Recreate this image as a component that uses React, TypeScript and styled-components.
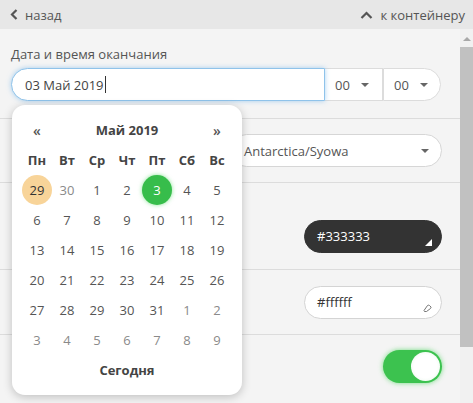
import React from "react";
import styled, { createGlobalStyle } from "styled-components";

const Global = createGlobalStyle`
  html, body { margin: 0; padding: 0; }
  body {
    background: #f4f4f4;
    font-family: "Open Sans", "Noto Sans", sans-serif;
    font-size: 13px;
    color: #555;
    overflow: hidden;
  }
  * { box-sizing: border-box; }
`;

const Page = styled.div`
  width: 473px;
  height: 403px;
  display: flex;
  flex-direction: column;
  position: relative;
  overflow: hidden;
`;

const Header = styled.div`
  height: 29px;
  flex: none;
  background: #e7e7e7;
  display: flex;
  align-items: center;
  justify-content: space-between;
  padding: 0 8px 0 10px;
  color: #555;
`;

const HeaderLink = styled.div`
  display: flex;
  align-items: center;
  gap: 7px;
`;

const Body = styled.div`
  flex: 1;
  display: flex;
  min-height: 0;
`;

const Content = styled.div`
  flex: 1;
  display: flex;
  flex-direction: column;
`;

const Scrollbar = styled.div`
  width: 13px;
  flex: none;
  background: #f1f1f1;
  display: flex;
  flex-direction: column;
  align-items: center;
  padding-top: 8px;
`;

const ScrollArrow = styled.div`
  width: 0;
  height: 0;
  border-left: 4px solid transparent;
  border-right: 4px solid transparent;
  border-bottom: 4px solid #a8a8a8;
`;

const ScrollThumb = styled.div`
  margin-top: 6px;
  width: 13px;
  height: 300px;
  background: #c1c1c1;
`;

const Section = styled.div<{ $h: number; $top?: boolean }>`
  height: ${(p) => p.$h}px;
  flex: none;
  border-top: ${(p) => (p.$top ? "1px solid #dcdcdc" : "none")};
  padding: 0 18px 0 11px;
`;

const DateSection = styled(Section)`
  padding-top: 16px;
`;

const RowSection = styled(Section)<{ $align?: string; $pt?: number }>`
  display: flex;
  align-items: ${(p) => p.$align || "center"};
  justify-content: flex-end;
  padding-top: ${(p) => p.$pt || 0}px;
`;

const Label = styled.div`
  color: #555;
  line-height: 18px;
  margin-bottom: 5px;
`;

const InputGroup = styled.div`
  display: flex;
  height: 33px;
`;

const DateInput = styled.div`
  width: 314px;
  height: 33px;
  border: 1px solid #8fc3ea;
  border-radius: 17px 0 0 17px;
  background: #fff;
  box-shadow: 0 0 5px rgba(102, 175, 233, 0.55);
  display: flex;
  align-items: center;
  padding-left: 13px;
  color: #444;
  position: relative;
  z-index: 1;
`;

const Caret = styled.span`
  display: inline-block;
  width: 1px;
  height: 17px;
  background: #333;
  margin-left: 1px;
`;

const TimeSelect = styled.div<{ $last?: boolean }>`
  width: 58px;
  height: 33px;
  border: 1px solid #dcdcdc;
  border-left: ${(p) => (p.$last ? "1px solid #dcdcdc" : "none")};
  border-radius: ${(p) => (p.$last ? "0 17px 17px 0" : "0")};
  background: #fff;
  display: flex;
  align-items: center;
  padding-left: 10px;
  gap: 11px;
  color: #555;
`;

const Caret2 = styled.span`
  width: 0;
  height: 0;
  border-left: 4px solid transparent;
  border-right: 4px solid transparent;
  border-top: 4px solid #666;
`;

const Select = styled.div`
  width: 212px;
  height: 33px;
  border: 1px solid #d6d6d6;
  border-radius: 17px;
  background: #fff;
  display: flex;
  align-items: center;
  justify-content: space-between;
  padding: 0 12px 0 13px;
  color: #555;
`;

const ColorPill = styled.div<{ $bg: string; $fg: string }>`
  width: 138px;
  height: 33px;
  border-radius: 17px;
  border: 1px solid ${(p) => (p.$bg === "#ffffff" ? "#d4d4d4" : p.$bg)};
  background: ${(p) => p.$bg};
  color: ${(p) => p.$fg};
  display: flex;
  align-items: center;
  justify-content: space-between;
  padding: 0 9px 0 12px;
`;

const PillIcon = styled.div`
  align-self: flex-end;
  margin-bottom: 6px;
  display: flex;
`;

const Toggle = styled.div`
  width: 59px;
  height: 33px;
  border-radius: 17px;
  background: #3cc24f;
  box-shadow: 0 0 5px rgba(60, 210, 80, 0.7);
  display: flex;
  align-items: center;
  justify-content: flex-end;
  padding: 2px;
`;

const Knob = styled.div`
  width: 29px;
  height: 29px;
  border-radius: 50%;
  background: radial-gradient(circle at 50% 50%, #fff 55%, #e4f5e6 100%);
`;

const Popup = styled.div`
  position: absolute;
  left: 12px;
  top: 105px;
  width: 230px;
  height: 290px;
  background: #fff;
  border-radius: 13px;
  box-shadow: 0 2px 10px rgba(0, 0, 0, 0.22);
  padding: 10px;
  z-index: 5;
  display: grid;
  grid-template-columns: repeat(7, 30px);
  grid-auto-rows: 30px;
`;

const NavCell = styled.div`
  display: flex;
  align-items: center;
  justify-content: center;
  color: #555;
  font-size: 14px;
  font-weight: 600;
`;

const MonthTitle = styled.div`
  grid-column: span 5;
  display: flex;
  align-items: center;
  justify-content: center;
  font-weight: 700;
  color: #444;
`;

const WeekDay = styled.div`
  display: flex;
  align-items: center;
  justify-content: center;
  font-weight: 700;
  color: #444;
`;

const Day = styled.div<{ $kind?: "other" | "today" | "selected" }>`
  display: flex;
  align-items: center;
  justify-content: center;
  border-radius: 50%;
  color: ${(p) =>
    p.$kind === "selected" ? "#fff" : p.$kind === "other" ? "#8a8a8a" : p.$kind === "today" ? "#333" : "#555"};
  background: ${(p) =>
    p.$kind === "selected" ? "#37bd4b" : p.$kind === "today" ? "#f8d499" : "transparent"};
  box-shadow: ${(p) => (p.$kind === "selected" ? "0 0 4px rgba(60, 210, 80, 0.6)" : "none")};
`;

const TodayBtn = styled.div`
  grid-column: span 7;
  display: flex;
  align-items: center;
  justify-content: center;
  font-weight: 700;
  color: #444;
`;

type D = { n: number; k?: "other" | "today" | "selected" };
const days: D[] = [
  { n: 29, k: "today" }, { n: 30, k: "other" }, { n: 1 }, { n: 2 }, { n: 3, k: "selected" }, { n: 4 }, { n: 5 },
  ...Array.from({ length: 26 }, (_, i) => ({ n: i + 6 })),
  { n: 1, k: "other" as const }, { n: 2, k: "other" as const },
  ...[3, 4, 5, 6, 7, 8, 9].map((n) => ({ n, k: "other" as const })),
];

const weekdays = ["Пн", "Вт", "Ср", "Чт", "Пт", "Сб", "Вс"];

export default function App() {
  return (
    <>
      <Global />
      <Page>
        <Header>
          <HeaderLink>
            <svg width="8" height="11" viewBox="0 0 8 11">
              <path d="M6.5 1 L2 5.5 L6.5 10" fill="none" stroke="#555" strokeWidth="2.2" />
            </svg>
            назад
          </HeaderLink>
          <HeaderLink>
            <svg width="13" height="8" viewBox="0 0 13 8">
              <path d="M1.5 7 L6.5 2 L11.5 7" fill="none" stroke="#555" strokeWidth="2.2" />
            </svg>
            к контейнеру
          </HeaderLink>
        </Header>
        <Body>
          <Content>
            <DateSection $h={89}>
              <Label>Дата и время оканчания</Label>
              <InputGroup>
                <DateInput>
                  03 Май 2019<Caret />
                </DateInput>
                <TimeSelect>
                  00 <Caret2 />
                </TimeSelect>
                <TimeSelect $last>
                  00 <Caret2 />
                </TimeSelect>
              </InputGroup>
            </DateSection>
            <RowSection $h={64} $top>
              <Select>
                Antarctica/Syowa <Caret2 />
              </Select>
            </RowSection>
            <RowSection $h={87} $top $pt={20}>
              <ColorPill $bg="#333333" $fg="#fff">
                #333333
                <PillIcon>
                  <svg width="7" height="7" viewBox="0 0 7 7">
                    <path d="M7 0 L7 7 L0 7 Z" fill="#fff" />
                  </svg>
                </PillIcon>
              </ColorPill>
            </RowSection>
            <RowSection $h={65} $top>
              <ColorPill $bg="#ffffff" $fg="#333">
                #ffffff
                <PillIcon>
                  <svg width="9" height="8" viewBox="0 0 9 8">
                    <path d="M1 6.5 L4.5 1.5 Q5.5 0.8 6.5 1.5 L8 3 Q8.2 4 7.5 4.5 L3.5 7.5 L1.5 7.5 Z" fill="none" stroke="#666" strokeWidth="0.9" />
                  </svg>
                </PillIcon>
              </ColorPill>
            </RowSection>
            <RowSection $h={68} $top $align="flex-start" $pt={15}>
              <Toggle>
                <Knob />
              </Toggle>
            </RowSection>
          </Content>
          <Scrollbar>
            <ScrollArrow />
            <ScrollThumb />
          </Scrollbar>
        </Body>
        <Popup>
          <NavCell>«</NavCell>
          <MonthTitle>Май 2019</MonthTitle>
          <NavCell>»</NavCell>
          {weekdays.map((w) => (
            <WeekDay key={w}>{w}</WeekDay>
          ))}
          {days.map((d, i) => (
            <Day key={i} $kind={d.k}>
              {d.n}
            </Day>
          ))}
          <TodayBtn>Сегодня</TodayBtn>
        </Popup>
      </Page>
    </>
  );
}
